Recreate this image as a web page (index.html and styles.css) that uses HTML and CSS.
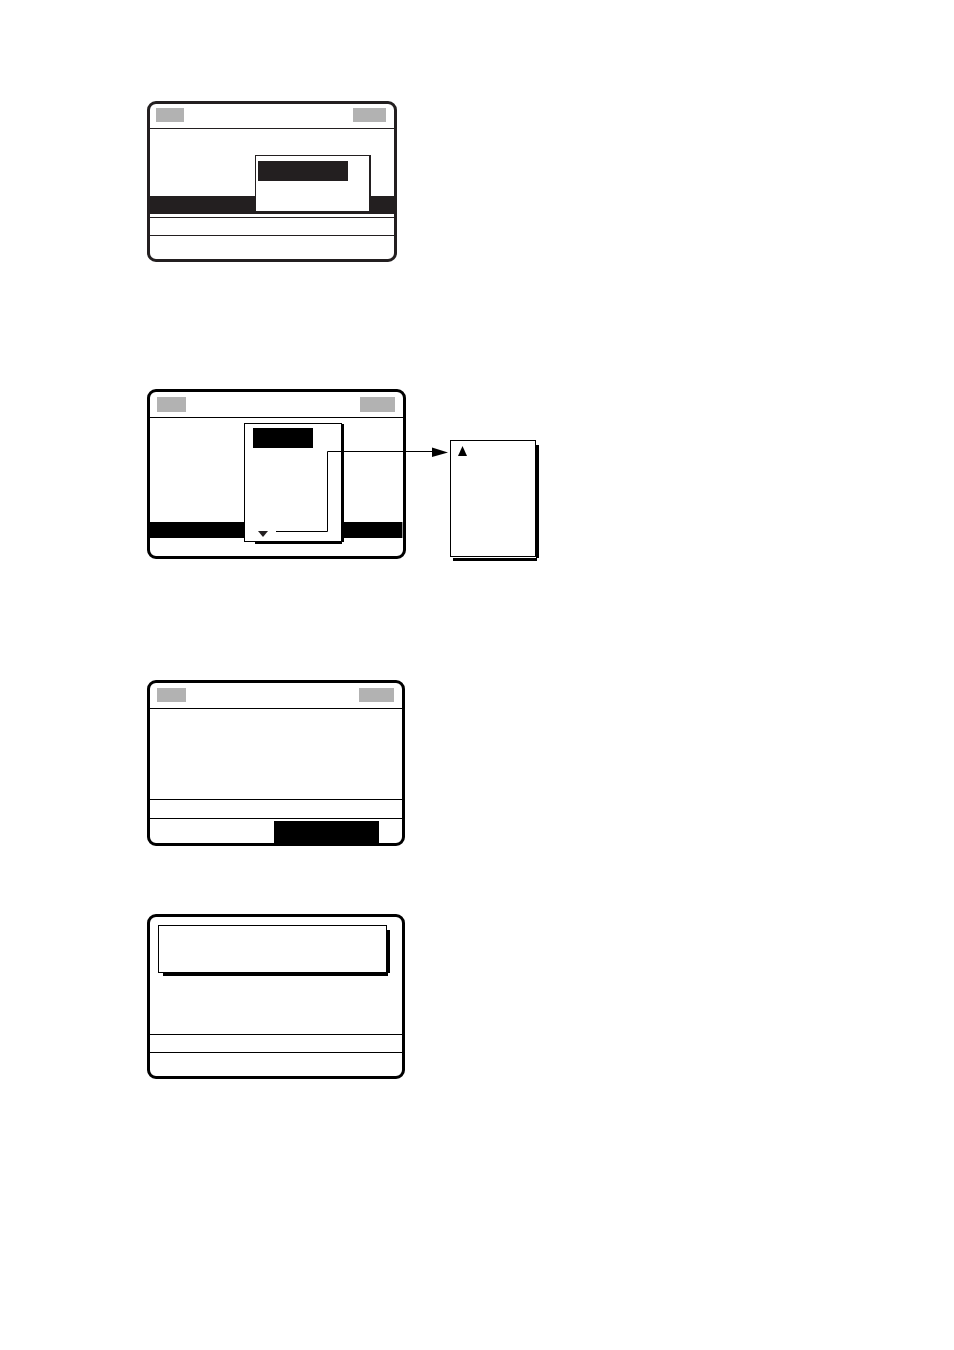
FILE: index.html
```
<!DOCTYPE html>
<html lang="en">
<head>
  <meta charset="UTF-8" />
  <meta name="viewport" content="width=device-width, initial-scale=1.0" />
  <title>Menu screens</title>
  <link rel="stylesheet" href="styles.css">
</head>
<body>
  <main class="page">

    <!-- compose screen, two-line menu -->
    <section class="figure">
      <div class="screen screen-soft">
        <div class="screen-header">
          <span class="tag"></span>
          <span class="tag tag-right"></span>
        </div>
        <div class="screen-body"></div>
        <div class="selected-row"></div>
        <div class="line-row"></div>
        <div class="screen-footer"></div>
        <div class="menu menu-short">
          <div class="menu-selected"></div>
        </div>
      </div>
    </section>

    <!-- long menu that scrolls on to a second part -->
    <section class="figure figure-scroll">
      <div class="screen screen-list">
        <div class="screen-header">
          <span class="tag"></span>
          <span class="tag tag-right"></span>
        </div>
        <div class="screen-body"></div>
        <div class="selected-row"></div>
        <div class="screen-footer"></div>
        <div class="menu menu-long">
          <div class="menu-selected"></div>
          <svg class="arrow-down" width="10" height="6" viewBox="0 0 10 6"><path d="M0 0h10L5 6z" fill="#231f20"/></svg>
        </div>
      </div>
      <div class="menu menu-more">
        <svg class="arrow-up" width="9" height="10" viewBox="0 0 9 10"><path d="M4.5 0L9 10H0z"/></svg>
      </div>
      <svg class="connector" width="172" height="86" viewBox="0 0 172 86">
        <path d="M0 84.5H51.500V4.500H158" fill="none" stroke="#000"/>
        <path d="M156 0.500L172 5.500L156 10z"/>
      </svg>
    </section>

    <!-- send button highlighted -->
    <section class="figure">
      <div class="screen screen-send">
        <div class="screen-header">
          <span class="tag"></span>
          <span class="tag tag-right"></span>
        </div>
        <div class="screen-body"></div>
        <div class="line-row"></div>
        <div class="screen-footer">
          <div class="footer-selected"></div>
        </div>
      </div>
    </section>

    <!-- message box -->
    <section class="figure">
      <div class="screen screen-message">
        <div class="screen-body">
          <div class="message"></div>
        </div>
        <div class="line-row"></div>
        <div class="screen-footer"></div>
      </div>
    </section>

  </main>
</body>
</html>
```
FILE: styles.css
```
* {
  margin: 0;
  padding: 0;
  box-sizing: border-box;
}

body {
  font-family: "Liberation Sans", Arial, sans-serif;
  background: #fff;
  color: #000;
}

.page {
  display: flex;
  flex-direction: column;
  padding: 101px 20px 101px 147px;
}

.figure {
  position: relative;
  display: flex;
  align-items: flex-start;
  margin-bottom: 68px;
}

.figure:first-child {
  margin-bottom: 127px;
}

.figure-scroll {
  margin-bottom: 121px;
}

.screen {
  --ink: #000;
  position: relative;
  flex: 0 1 258px;
  border: 3px solid var(--ink);
  border-radius: 9px;
}

.screen-soft {
  --ink: #231f20;
  flex-basis: 250px;
}

.screen-list {
  flex-basis: 259px;
}

.screen-header {
  display: flex;
  justify-content: space-between;
  height: 26px;
  padding: 5px 8px 0 7px;
  border-bottom: 1px solid var(--ink);
}

.screen-soft .screen-header {
  height: 25px;
  padding: 4px 8px 0 6px;
}

.tag {
  width: 29px;
  height: 14px;
  background: #b2b2b2;
}

.tag-right {
  width: 35px;
}

.screen-soft .tag {
  width: 28px;
}

.screen-soft .tag-right {
  width: 33px;
}

.screen-list .tag {
  height: 15px;
}

.screen-soft .screen-body {
  min-height: 67px;
}

.screen-list .screen-body {
  min-height: 104px;
}

.screen-send .screen-body {
  min-height: 90px;
}

.screen-message .screen-body {
  min-height: 117px;
  padding: 8px 15px 0 8px;
}

.selected-row {
  height: 18px;
  background: var(--ink);
}

.screen-soft .selected-row {
  margin-bottom: 3px;
}

.screen-list .selected-row {
  height: 16px;
  border-right: 1px solid #999;
}

.line-row {
  height: 19px;
  border-top: 1px solid var(--ink);
  border-bottom: 1px solid var(--ink);
}

.screen-send .line-row {
  height: 20px;
}

.screen-footer {
  display: flex;
  justify-content: flex-end;
  min-height: 23px;
}

.screen-list .screen-footer {
  min-height: 18px;
}

.screen-send .screen-footer {
  min-height: 24px;
  padding: 2px 23px 0 0;
}

.footer-selected {
  width: 105px;
  background: var(--ink);
}

/* pop-up menus */
.menu {
  background: #fff;
  border: 1px solid #000;
}

.menu-selected {
  height: 20px;
  background: #000;
}

.menu-short {
  position: absolute;
  top: 51px;
  right: 23px;
  width: 116px;
  height: 59px;
  padding: 5px 21px 0 2px;
  border-color: var(--ink);
  border-width: 1px 2px 3px 1px;
}

.menu-short .menu-selected {
  background: var(--ink);
}

.menu-long {
  position: absolute;
  top: 31px;
  left: 94px;
  display: flex;
  flex-direction: column;
  justify-content: space-between;
  width: 98px;
  height: 119px;
  padding: 4px 28px 4px 8px;
}

.arrow-down {
  margin-left: 5px;
}

.menu-more {
  position: relative;
  width: 86px;
  height: 117px;
  margin: 51px 0 0 44px;
  padding: 5px 7px;
}

.arrow-up {
  display: block;
}

.connector {
  position: absolute;
  top: 58px;
  left: 129px;
}

.message {
  position: relative;
  height: 48px;
  border: 1px solid #000;
}

/* hard shadows: right edge, then bottom edge */
.menu-long::before,
.menu-long::after,
.menu-more::before,
.menu-more::after,
.message::before,
.message::after {
  content: "";
  position: absolute;
  background: #000;
}

.menu-long::before {
  top: 0;
  bottom: -1px;
  right: -3px;
  width: 2px;
}

.menu-long::after {
  left: 10px;
  right: -1px;
  bottom: -3px;
  height: 2px;
}

.menu-more::before {
  top: 4px;
  bottom: -2px;
  right: -4px;
  width: 3px;
}

.menu-more::after {
  left: 2px;
  right: -2px;
  bottom: -5px;
  height: 3px;
}

.message::before {
  top: 4px;
  bottom: -1px;
  right: -4px;
  width: 3px;
}

.message::after {
  left: 4px;
  right: -2px;
  bottom: -4px;
  height: 3px;
}
```
